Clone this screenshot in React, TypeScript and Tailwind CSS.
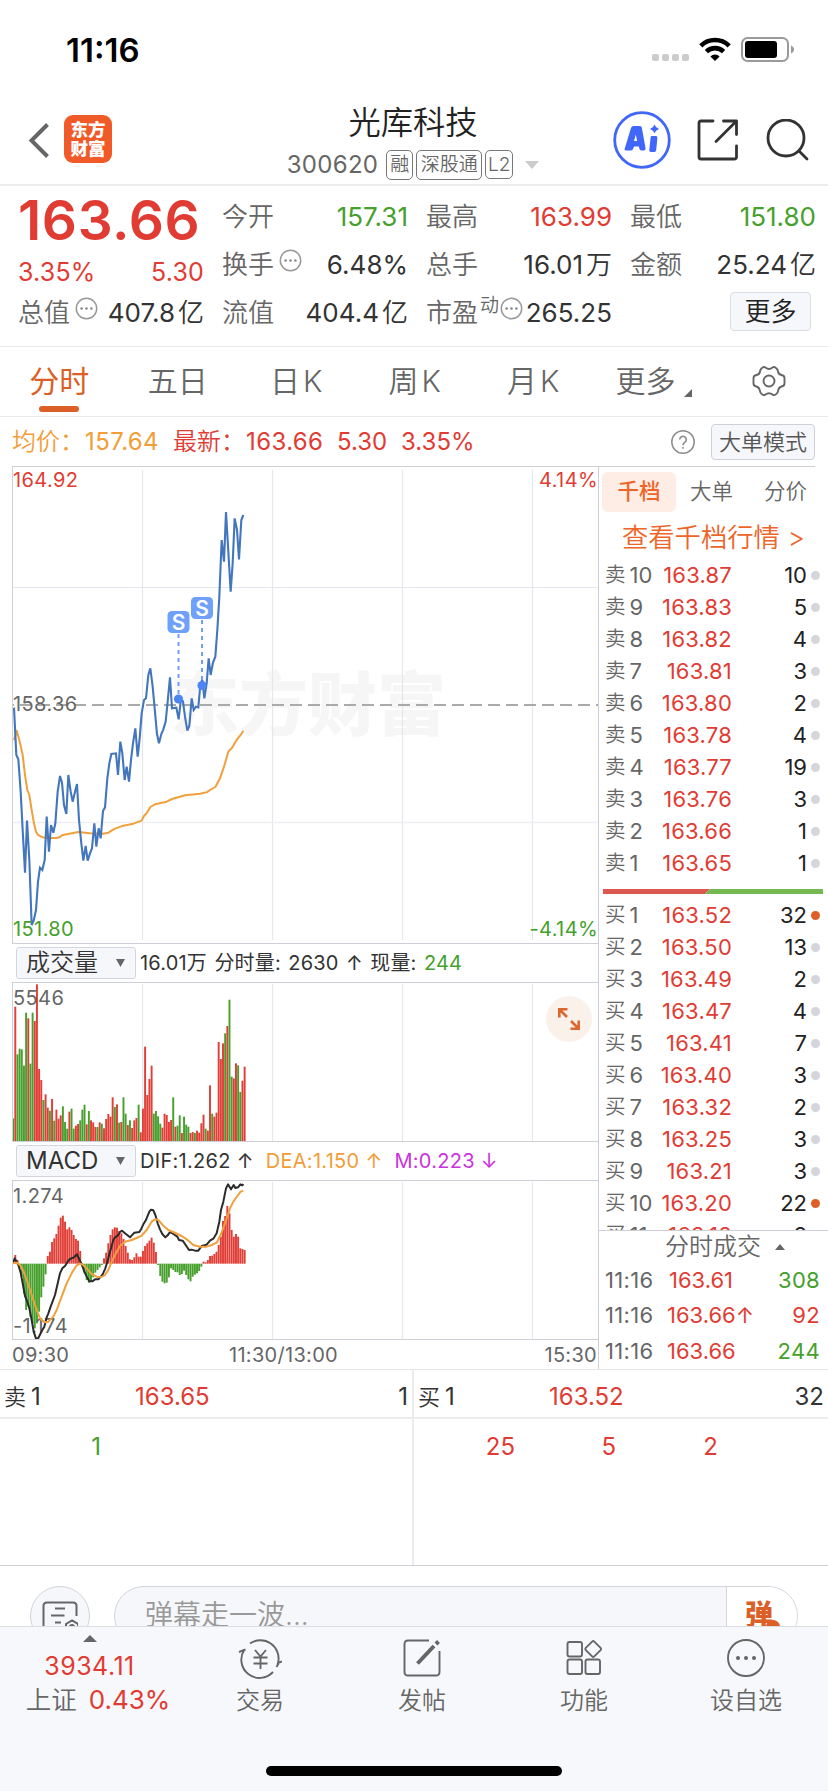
import React from "react";

const INK = "text-[#333333]";
const GRAY = "text-[#666666]";
const RED = "text-[#e03c34]";
const GREEN = "text-[#45a02c]";

const PRICE =
  "42,683 49,825 55,838 62,935 68,1050 75,1178 81,1022 88,1140 95,1335 101,1322 108,1290 114,1205 120,1163 127,1170 134,1140 140,1010 147,1115 153,1035 160,1058 166,1030 173,935 180,888 186,908 192,975 199,1002 205,885 212,935 218,965 224,940 231,912 237,1020 244,1090 250,1142 257,1098 263,1142 270,1120 276,1105 283,1030 289,1100 296,1045 302,1075 309,993 315,982 322,895 328,850 334,822 348,820 354,885 361,785 367,820 374,900 380,860 387,905 393,840 399,790 406,745 413,830 419,775 425,700 432,660 438,655 445,585 451,565 458,620 464,685 471,762 477,790 484,762 490,748 497,725 503,665 510,592 516,685 529,683 536,718 543,655 549,665 555,710 562,752 568,738 575,655 581,690 588,680 595,682 601,615 607,600 613,655 620,610 626,535 632,585 639,548 646,530 652,450 658,350 665,180 672,245 678,96 685,215 692,335 698,250 704,115 711,150 717,238 724,120 730,105";

const AVERAGE =
  "42,780 50,752 58,780 68,825 75,885 82,930 88,945 95,990 102,1030 108,1055 114,1065 125,1071 140,1074 170,1074 180,1071 186,1066 200,1063 235,1056 270,1060 310,1061 325,1058 345,1046 370,1037 400,1031 425,1022 432,1008 440,1000 451,981 465,973 500,965 516,957 555,946 600,941 620,937 630,930 646,921 660,895 672,860 685,815 695,805 710,780 722,765 730,752";

const VOLUME =
  "g535 r200 g343 g326 g328 g377 g218 r235 g371 g218 r243 r133 r387 r420 g480 r463 r503 g512 r477 g542 r509 r536 r526 g499 g546 g566 r515 g506 g566 r557 r552 g541 g509 g494 r553 g513 r541 r547 r561 g561 r547 g551 r565 r537 r522 r530 r472 g501 r493 g548 r546 g472 g521 r555 g541 r564 r541 r534 g494 r577 r506 r320 r465 r417 r377 g521 g513 g529 g551 r563 r521 r525 r546 r540 g472 r560 g557 g526 r579 g530 g554 g560 r579 r576 g579 r572 r578 r550 r524 g566 r572 r436 g521 r530 r518 r306 r357 r310 g280 r258 g179 g410 r415 r370 g376 g456 r422 r380".split(" ");

const MACD = [
  963, 945, 960, 985, 1010, 1060, 1110, 1100, 1130, 1150, 1165, 1150, 1115, 1072, 1040, 1003, 948, 935, 906, 895, 882, 857,
  833, 827, 845, 868, 862, 870, 885, 897, 902, 933, 980, 1000, 1020, 1028, 1025, 1012, 998, 990, 982, 975, 955, 938, 910,
  885, 868, 862, 863, 873, 880, 897, 918, 938, 958, 960, 952, 940, 950, 950, 933, 918, 910, 902, 893, 908, 936, 975, 1008,
  1025, 1030, 1028, 1012, 985, 990, 996, 997, 1005, 1002, 992, 1005, 1018, 1024, 1010, 1004, 1000, 993, 980, 965, 967, 960,
  948, 947, 942, 935, 915, 890, 843, 828, 798, 820, 870, 890, 882, 890, 925, 927, 930,
];

const DIF =
  "39,968 44,955 48,962 55,975 62,998 68,1030 75,1068 82,1085 88,1105 95,1140 101,1175 108,1196 115,1194 121,1182 127,1170 133,1160 139,1135 145,1120 152,1100 165,1065 172,1035 180,1000 187,985 195,978 203,965 210,957 222,952 231,943 238,958 246,975 253,995 260,1010 268,1024 277,1024 285,1018 295,1018 308,1003 316,985 322,965 330,935 340,900 345,892 354,886 360,876 366,872 375,880 390,892 403,878 418,876 424,866 430,853 438,840 448,815 453,809 460,811 466,825 473,850 480,868 487,882 496,892 503,886 510,876 520,882 532,890 537,900 548,902 555,912 567,930 575,929 585,932 595,932 605,918 620,914 630,902 640,896 650,880 658,845 663,810 670,785 678,745 684,733 693,748 701,735 706,744 714,742 721,733 727,736 730,732";

const DEA =
  "39,970 50,968 60,975 70,992 80,1020 90,1050 100,1080 110,1110 120,1135 133,1147 145,1145 160,1130 170,1110 185,1070 200,1030 215,1000 230,976 240,971 250,975 260,985 275,1002 290,1010 305,1011 315,1005 325,990 335,965 345,945 360,918 375,905 395,900 410,894 425,887 440,870 455,845 465,838 475,840 490,857 505,870 520,876 545,888 560,898 580,915 600,920 620,920 635,915 650,908 662,885 675,850 690,805 700,785 712,768 722,755 730,752";

const barX = (i: number, n: number) => 39.5 + (i * 694.5) / (n - 1);

/* ---------- small pieces ---------- */

function Dots() {
  return (
    <svg className="mb-[10px] ml-[5px] h-[23px] w-[23px] shrink-0" viewBox="0 0 23 23">
      <circle cx="11.5" cy="11.5" r="10.2" fill="none" stroke="#999" strokeWidth="1.5" />
      <circle cx="6.6" cy="11.5" r="1.3" fill="#888" />
      <circle cx="11.5" cy="11.5" r="1.3" fill="#888" />
      <circle cx="16.4" cy="11.5" r="1.3" fill="#888" />
    </svg>
  );
}

function Stat(p: { label: string; value: string; unit?: string; color?: string; dots?: boolean; sup?: string }) {
  return (
    <div className="flex h-12 w-[186px] items-center whitespace-nowrap">
      <span className={`text-[26px] font-[350] ${GRAY}`}>{p.label}</span>
      {p.sup && <span className={`mb-4 ml-[2px] text-[19px] font-[350] ${GRAY}`}>{p.sup}</span>}
      {p.dots && (
        <span className={p.sup ? "-ml-1 flex" : "flex"}>
          <Dots />
        </span>
      )}
      <span className={`ml-auto text-[26px] ${p.color ?? INK}`}>{p.value}</span>
      {p.unit && <span className={`ml-[3px] text-[26px] font-[350] ${INK}`}>{p.unit}</span>}
    </div>
  );
}

function StatusBar() {
  return (
    <div className="flex h-[98px] items-center pl-[66px] pr-[33px]">
      <span className="mt-[3px] text-[33px] font-semibold text-black">11:16</span>
      <div className="ml-auto flex items-center">
        <div className="mr-[10px] mt-4 flex gap-[3px]">
          {[0, 1, 2, 3].map((i) => (
            <span key={i} className="h-[7px] w-[7px] rounded-[2px] bg-[#cccccc]" />
          ))}
        </div>
        <svg className="mr-[10px] h-6 w-8" viewBox="0 0 32 24" fill="none" stroke="#000" strokeWidth="4.6">
          <path d="M1.8 8.8a20.4 20.4 0 0 1 28.4 0" />
          <path d="M7.4 14.6a12.4 12.4 0 0 1 17.2 0" />
          <path d="M16 24l-4.6-4.6a6.5 6.5 0 0 1 9.2 0z" fill="#000" stroke="none" />
        </svg>
        <svg className="h-[25px] w-[54px]" viewBox="0 0 54 25">
          <rect x="1" y="1" width="46" height="23" rx="5.5" fill="none" stroke="#9a9a9a" strokeWidth="2" />
          <rect x="4" y="4" width="32" height="17" rx="3" fill="#000" />
          <path d="M50 8.5c4 1.5 4 6.500 0 8z" fill="#9a9a9a" />
        </svg>
      </div>
    </div>
  );
}

function Header() {
  return (
    <div className="flex h-[88px] items-center border-b-2 border-[#ececec] pl-7 pr-[19px]">
      <svg className="mt-[-3px] h-9 w-6" viewBox="0 0 24 36" fill="none" stroke="#666" strokeWidth="4">
        <path d="M19.500 2.500L3.500 18.500 19.500 34.500" />
      </svg>
      <div className="ml-3 mt-[-4px] flex h-12 w-12 flex-col items-center justify-center rounded-[9px] bg-[#f05a28] text-[17.500px] font-black leading-[19px] text-white">
        <span>东方</span>
        <span>财富</span>
      </div>
      <div className="ml-[169px] flex w-[264px] flex-col items-center pt-[2px]">
        <div className="h-10 whitespace-nowrap text-[32.300px] font-[350] leading-10 text-[#222]">光库科技</div>
        <div className={`mt-[5px] flex h-[34px] items-center whitespace-nowrap ${GRAY}`}>
          <span className="mr-2 text-[24px] tracking-[0.3px]">300620</span>
          <span className="mr-[3px] flex h-[30px] w-[27px] items-center justify-center rounded-[5px] border border-[#777] text-[19px] font-[350]">融</span>
          <span className="mr-[3px] flex h-[30px] w-[66px] items-center justify-center rounded-[5px] border border-[#777] text-[19px] font-[350]">深股通</span>
          <span className="flex h-[29px] w-[28px] items-center justify-center rounded-[5px] border border-[#777] text-[19px] font-light">L2</span>
          <svg className="ml-3 h-2 w-[14px]" viewBox="0 0 14 8">
            <path d="M0 0h14L7 8z" fill="#ccc" />
          </svg>
        </div>
      </div>
      <svg className="ml-auto mt-[-3px] h-[58px] w-[58px]" viewBox="0 0 58 58">
        <circle cx="29" cy="29" r="27.300" fill="none" stroke="#4066fa" strokeWidth="2.800" />
        <g fill="#4066fa">
          <path fillRule="evenodd" d="M20.500 15h6.500q1.500 0 1.800 1.600L32.500 37q.4 2.400-1.600 2.400h-2.600q-1.800 0-2-1.800l-.3-2.200h-5l-1 2.500q-.6 1.500-2.200 1.500h-4.600q-2.400 0-1.300-2.500L18 17q.8-2 2.500-2zm2.300 8.500l-1.800 6.600h3.200z" />
          <path d="M38.500 25h4.500q1.600 0 1.400 1.800L43.200 39q-.2 2-1.800 2h-3.600q-1.700 0-1.500-1.900l1.300-12.300q.1-1.800.9-1.800z" />
          <path d="M41.500 13.500q1 3.300 4.500 4.400-3.500 1.100-4.500 4.400-1-3.300-4.500-4.400 3.500-1.100 4.500-4.400z" />
        </g>
      </svg>
      <svg className="ml-[26px] mt-[-3px] h-[42px] w-[42px]" viewBox="0 0 42 42" fill="none" stroke="#333" strokeWidth="2.800" strokeLinecap="round" strokeLinejoin="round">
        <path d="M16 2H4Q2 2 2 4V38Q2 40 4 40H37Q39.500 40 39.500 38V27" />
        <path d="M26.500 2H39.500V15.500M39 2.500L19 22.500" />
      </svg>
      <svg className="ml-[26px] mt-[-3px] h-[42px] w-[44px]" viewBox="0 0 44 42" fill="none" stroke="#333" strokeWidth="2.800" strokeLinecap="round">
        <circle cx="21" cy="19" r="18" />
        <path d="M34 32l8 8" />
      </svg>
    </div>
  );
}

function Quote() {
  return (
    <div className="flex h-[161px] gap-[18px] border-b border-[#ebebeb] pl-[18px] pr-3 pt-[7px]">
      <div className="w-[186px] shrink-0">
        <div className={`flex h-[54px] items-center whitespace-nowrap text-[55px] font-semibold tracking-[0.6px] ${RED}`}>163.66</div>
        <div className={`flex h-[42px] items-center justify-between pt-2 text-[25px] tracking-[0.2px] ${RED}`}>
          <span>3.35%</span>
          <span>5.30</span>
        </div>
        <Stat label="总值" dots value="407.8" unit="亿" />
      </div>
      <div>
        <Stat label="今开" value="157.31" color={GREEN} />
        <Stat label="换手" dots value="6.48%" />
        <Stat label="流值" value="404.4" unit="亿" />
      </div>
      <div>
        <Stat label="最高" value="163.99" color={RED} />
        <Stat label="总手" value="16.01" unit="万" />
        <Stat label="市盈" sup="动" dots value="265.25" />
      </div>
      <div>
        <Stat label="最低" value="151.80" color={GREEN} />
        <Stat label="金额" value="25.24" unit="亿" />
        <div className="flex h-12 w-[186px] items-center justify-end pr-[5px]">
          <span className="mt-[-3px] flex h-[39px] w-[81px] items-center justify-center rounded-[4px] border border-[#d9dde5] bg-[#f6f7fa] text-[26px] font-[350] text-[#222]">更多</span>
        </div>
      </div>
    </div>
  );
}

function Tabs() {
  const tab = "flex w-[118.500px] items-center justify-center whitespace-nowrap pb-[2px]";
  return (
    <div className={`flex h-[70px] items-center border-b border-[#ebebeb] text-[30px] font-[350] ${GRAY}`}>
      <div className="relative flex h-full w-[118.500px] items-center justify-center pb-[2px] font-normal text-[#db5f27]">
        分时
        <span className="absolute bottom-1 h-[6px] w-10 rounded-full bg-[#db5f27]" />
      </div>
      <div className={tab}>五日</div>
      <div className={tab}>日<span className="ml-[3px]">K</span></div>
      <div className={tab}>周<span className="ml-[3px]">K</span></div>
      <div className={tab}>月<span className="ml-[3px]">K</span></div>
      <div className="flex w-[119px] items-center justify-center pb-[2px] pl-[3px]">
        更多
        <svg className="ml-2 mt-6 h-2 w-2" viewBox="0 0 8 8">
          <path d="M8 0v8H0z" fill="#666" />
        </svg>
      </div>
      <svg className="mb-[2px] ml-[40px] h-8 w-[34px]" viewBox="0 0 34 32" fill="none" stroke="#666" strokeWidth="1.900" strokeLinejoin="round">
        <path d="M9.500 3.500Q11.500 1 13.500 2.500Q17 5.500 20.500 2.500Q22.500 1 24.500 3.500Q26 5 26 6.500Q26.500 9.500 29.500 10Q32.500 10.500 32.500 13V18.500Q32.500 21 29.500 21.500Q26.500 22.500 26.200 25.500Q26 28 24 29.300Q22 30.800 20.500 29.500Q17 26.800 13.500 29.500Q12 30.800 10 29.300Q8 28 7.800 25.500Q7.500 22.500 4.500 21.500Q1.500 21 1.500 18.500V13Q1.500 10.500 4.500 10Q7.500 9.500 8 6.500Q8 5 9.500 3.500Z" />
        <circle cx="17" cy="16" r="5.500" />
      </svg>
    </div>
  );
}

function InfoRow() {
  return (
    <div className="mr-[13px] ml-3 flex h-[50px] items-center whitespace-nowrap border-b border-[#cfcfd8] text-[24px]">
      <span className="w-[73px] font-[350] text-[#f29d38]">均价：</span>
      <span className="w-[88px] tracking-[0.4px] text-[#f29d38]">157.64</span>
      <span className={`w-[73px] font-[350] ${RED}`}>最新：</span>
      <span className={`w-[91px] tracking-[0.4px] ${RED}`}>163.66</span>
      <span className={`w-[64px] ${RED}`}>5.30</span>
      <span className={RED}>3.35%</span>
      <svg className="ml-auto h-6 w-6" viewBox="0 0 24 24" fill="none" stroke="#8c8c8c">
        <circle cx="12" cy="12" r="11.200" strokeWidth="1.500" />
        <path d="M8.700 9.500a3.300 3.300 0 1 1 5 2.900c-1.200.8-1.700 1.200-1.700 2.800M12 17v1.800" strokeWidth="1.600" />
      </svg>
      <span className="ml-4 flex h-9 w-[104px] items-center justify-center rounded-[4px] border border-[#cfd0da] bg-[#f6f7fa] text-[22px] font-[350] text-[#555]">大单模式</span>
    </div>
  );
}

function Grid({ h, top }: { h: number; top: number }) {
  return (
    <g stroke="#e6e7ee" strokeWidth="1.200">
      {[130, 260, 390, 520].map((x) => (
        <line key={x} x1={x + 0.500} x2={x + 0.500} y1={top} y2={h} />
      ))}
    </g>
  );
}

function SellMark({ x, y, to }: { x: number; y: number; to: number }) {
  return (
    <g>
      <line x1={x} x2={x} y1={y + 12} y2={to} stroke="#6e9df8" strokeWidth="2" strokeDasharray="4 4" />
      <rect x={x - 11} y={y - 11} width="22" height="22" rx="4.500" fill="#6fa0fa" />
      <text x={x} y={y + 7.500} textAnchor="middle" fontSize="21" fontWeight="600" fill="#fff">S</text>
      <circle cx={x} cy={to} r="4.600" fill="#4d86f2" />
    </g>
  );
}

const LABEL = "absolute text-[20px] leading-7 tracking-[0.4px]";

function Charts() {
  const n = VOLUME.length;
  const m = MACD.length;
  return (
    <div className="ml-3 w-[587px] shrink-0 border-r border-[#cfcfd8]">
      <div className="relative h-[477px] border-b border-l border-[#cfcfd8]">
        <svg className="block h-full w-full" viewBox="1 0 585 476">
          <g fill="#f6f6f6">
            <text x="158" y="263" fontSize="69" fontWeight="900" textLength="276" className="font-['Noto_Sans_CJK_SC',sans-serif]">东方财富</text>
          </g>
          <Grid h={473} top={3} />
          <line x1="0" x2="586" y1="120.500" y2="120.500" stroke="#e6e7ee" />
          <line x1="0" x2="586" y1="355.500" y2="355.500" stroke="#eeeff4" strokeWidth="1.500" />
          <line x1="0" x2="586" y1="238" y2="238" stroke="#aaa" strokeWidth="1.800" strokeDasharray="12 6" strokeDashoffset="10" />
          <g transform="translate(-12 13) scale(0.33333)" fill="none" strokeLinejoin="round">
            <polyline points={AVERAGE} stroke="#f0a03c" strokeWidth="6" />
            <polyline points={PRICE} stroke="#4376bd" strokeWidth="6.300" strokeLinejoin="miter" strokeMiterlimit="3" />
          </g>
          <SellMark x={166.500} y={155} to={232} />
          <SellMark x={190} y={141} to={218.500} />
        </svg>
        <span className={`${LABEL} left-0 top-[-1px] ${RED}`}>164.92</span>
        <span className={`${LABEL} right-0 top-[-1px] ${RED}`}>4.14%</span>
        <span className={`${LABEL} left-0 top-[223px] ${GRAY}`}>158.36</span>
        <span className={`${LABEL} bottom-0 left-0 ${GREEN}`}>151.80</span>
        <span className={`${LABEL} bottom-0 right-0 ${GREEN}`}>-4.14%</span>
      </div>

      <IndicatorBar name="成交量" light>
        <span className="tracking-[0.2px] [word-spacing:1.5px]">16.01万 分时量: 2630 ↑ 现量: <span className={GREEN}>244</span></span>
      </IndicatorBar>
      <div className="relative h-[160px] border border-r-0 border-[#cfcfd8]">
        <svg className="block h-full w-full" viewBox="1 0 585 158">
          <Grid h={158} top={1} />
          <g transform="translate(-12 -43) scale(0.33333)">
            {VOLUME.map((v, i) => (
              <rect key={i} x={barX(i, n) - 3} y={Number(v.slice(1))} width="5.800" height={604 - Number(v.slice(1))} fill={v[0] === "r" ? "#e03e36" : "#47a02d"} />
            ))}
          </g>
        </svg>
        <span className={`${LABEL} left-0 top-[1px] ${GRAY}`}>5546</span>
        <span className="absolute right-[6px] top-[13px] flex h-[46px] w-[46px] items-center justify-center rounded-full bg-[#fbf1eb]">
          <svg className="h-6 w-6" viewBox="0 0 24 24" fill="none" stroke="#db6630" strokeWidth="2.600">
            <path d="M2.300 10.500V2.300H10.500M2.500 2.500L10 10M21.700 13.500V21.700H13.500M21.500 21.500L14 14" />
          </svg>
        </span>
      </div>

      <IndicatorBar name="MACD">
        <span>DIF:1.262 ↑</span>
        <span className="ml-3 text-[#f29d38]">DEA:1.150 ↑</span>
        <span className="ml-3 text-[#cc33dd]">M:0.223 ↓</span>
      </IndicatorBar>
      <div className="relative h-[160px] border border-r-0 border-[#cfcfd8]">
        <svg className="block h-full w-full" viewBox="1 0 585 158">
          <Grid h={158} top={1} />
          <g transform="translate(-12 -241) scale(0.33333)">
            {MACD.map((v, i) => (
              <rect key={i} x={barX(i, m) - 3} y={Math.min(v, 971)} width="5.800" height={Math.abs(971 - v)} fill={v < 971 ? "#e03e36" : "#47a02d"} />
            ))}
          </g>
        </svg>
        <span className={`${LABEL} left-0 top-[1px] ${GRAY}`}>1.274</span>
        <span className={`${LABEL} bottom-[-1px] left-0 ${GRAY}`}>-1.174</span>
        <svg className="absolute inset-0 h-full w-full" viewBox="1 0 585 158">
          <g transform="translate(-12 -241) scale(0.33333)" fill="none" strokeLinejoin="round">
            <polyline points={DIF} stroke="#2b2b2b" strokeWidth="6" />
            <polyline points={DEA} stroke="#f0a03c" strokeWidth="6" />
          </g>
        </svg>
      </div>
      <div className={`flex h-[29px] items-center pt-px text-[20px] tracking-[0.3px] ${GRAY}`}>
        <span className="w-[217px]">09:30</span>
        <span>11:30/13:00</span>
        <span className="ml-auto mr-[1px]">15:30</span>
      </div>
    </div>
  );
}

function IndicatorBar({ name, light, children }: { name: string; light?: boolean; children: React.ReactNode }) {
  return (
    <div className="flex h-[38px] items-center whitespace-nowrap pl-1 text-[20px] tracking-[0.3px] text-[#333]">
      <span className="mr-1 flex h-8 w-[120px] shrink-0 items-center justify-between rounded-[3px] border border-[#d3d6de] bg-[#f6f7fa] pl-[9px] pr-[10px] tracking-normal text-[#333]">
        <span className={light ? "text-[24px] font-[350]" : "text-[24px]"}>{name}</span>
        <svg className="h-2 w-[9px]" viewBox="0 0 9 8">
          <path d="M0 0h9L4.500 8z" fill="#666" />
        </svg>
      </span>
      {children}
    </div>
  );
}

type Order = [string, string, string, boolean?];

const SELLS: Order[] = [
  ["10", "163.87", "10"], ["9", "163.83", "5"], ["8", "163.82", "4"], ["7", "163.81", "3"], ["6", "163.80", "2"],
  ["5", "163.78", "4"], ["4", "163.77", "19"], ["3", "163.76", "3"], ["2", "163.66", "1"], ["1", "163.65", "1"],
];
const BUYS: Order[] = [
  ["1", "163.52", "32", true], ["2", "163.50", "13"], ["3", "163.49", "2"], ["4", "163.47", "4"], ["5", "163.41", "7"],
  ["6", "163.40", "3"], ["7", "163.32", "2"], ["8", "163.25", "3"], ["9", "163.21", "3"], ["10", "163.20", "22", true],
  ["11", "163.18", "8"],
];

function OrderRow({ side, o }: { side: string; o: Order }) {
  return (
    <div className="flex h-8 shrink-0 items-center whitespace-nowrap pl-[6px] pr-2 text-[22px]">
      <span className={`flex w-[50px] items-center ${GRAY}`}><span className="mr-1 text-[20.500px] font-[350]">{side}</span>{o[0]}</span>
      <span className={`w-[77px] text-right tracking-[0.2px] ${RED}`}>{o[1]}</span>
      <span className="ml-auto text-[#222]">{o[2]}</span>
      <span className={`ml-1 h-[9px] w-[9px] rounded-full ${o[3] ? "bg-[#db5f27]" : "bg-[#d5d5dc]"}`} />
    </div>
  );
}

const TRADES: [string, string, string, string][] = [
  ["11:16", "163.61", "308", GREEN],
  ["11:16", "163.66↑", "92", RED],
  ["11:16", "163.66", "244", GREEN],
];

function OrderBook() {
  return (
    <div className="flex min-w-0 flex-1 flex-col">
      <div className={`flex h-[49px] shrink-0 items-center pl-[3px] pt-px text-[21.500px] font-[350] ${GRAY}`}>
        <span className="flex h-10 w-[74px] items-center justify-center rounded-[6px] bg-[#fdede5] font-medium text-[#f06427]">千档</span>
        <span className="ml-[14px]">大单</span>
        <span className="ml-[31px]">分价</span>
      </div>
      <div className="flex h-[44px] shrink-0 items-center pl-[23px] text-[26.300px] text-[#ed6528]">
        <span className="font-[350]">查看千档行情</span>
        <span className="ml-2 font-light">&gt;</span>
      </div>
      <div className="mt-[-1px]">
        {SELLS.map((o) => <OrderRow key={o[0]} side="卖" o={o} />)}
      </div>
      <svg className="mb-[5px] ml-1 mt-[10px] h-[5px] w-[220px] shrink-0" viewBox="0 0 220 5">
        <path d="M0 0H107L102 5H0z" fill="#dc5750" />
        <path d="M107 0H220V5H102z" fill="#76b852" />
      </svg>
      <div className="flex h-[332px] shrink-0 flex-col overflow-hidden border-b border-[#cfcfd8]">
        {BUYS.map((o) => <OrderRow key={o[0]} side="买" o={o} />)}
      </div>
      <div className={`flex h-[31px] items-center pl-[66px] pt-px text-[24px] font-[350] ${GRAY}`}>
        分时成交
        <svg className="ml-[14px] h-[6px] w-[10px]" viewBox="0 0 10 6">
          <path d="M0 6h10L5 0z" fill="#666" />
        </svg>
      </div>
      {TRADES.map((t, i) => (
        <div key={i} className="flex h-9 items-center whitespace-nowrap pl-[6px] pr-2 text-[22px]">
          <span className={`w-[62px] tracking-[0.3px] ${GRAY}`}>{t[0]}</span>
          <span className={`${RED} ${i === 0 ? "pl-[2px]" : ""}`}>{t[1]}</span>
          <span className={`ml-auto tracking-[0.3px] ${t[3]}`}>{t[2]}</span>
        </div>
      ))}
    </div>
  );
}

function Level({ side, price, qty }: { side: string; price: string; qty: string }) {
  return (
    <div className="flex h-[49px] items-center border-b-2 border-[#ececec] px-[4px] pt-[6px] text-[24px] text-[#333]">
      <span className="flex w-[131px] items-center"><span className="mr-[5px] text-[22px] font-[350]">{side}</span>1</span>
      <span className={RED}>{price}</span>
      <span className="ml-auto">{qty}</span>
    </div>
  );
}

function Queue() {
  return (
    <div className="flex h-[197px] border-y border-[#cfcfd8] border-t-[#e6e6e6]">
      <div className="w-[414px] border-r-2 border-[#ececec]">
        <Level side="卖" price="163.65" qty="1" />
        <div className={`flex pt-[10px] text-[24px] leading-9 ${GREEN}`}>
          <span className="w-[101px] text-right">1</span>
        </div>
      </div>
      <div className="w-[414px]">
        <Level side="买" price="163.52" qty="32" />
        <div className={`flex pt-[10px] text-[24px] leading-9 ${RED}`}>
          <span className="w-[101px] text-right">25</span>
          <span className="w-[101px] text-right">5</span>
          <span className="w-[102px] text-right">2</span>
        </div>
      </div>
    </div>
  );
}

function Danmaku() {
  return (
    <div className="flex h-[60px] overflow-hidden pl-[30px] pt-5">
      <div className="flex h-[60px] w-[60px] justify-center rounded-full border border-[#d3d4dc] bg-[#f6f7fa] pt-[14px]">
        <svg className="h-9 w-9" viewBox="0 0 36 36" fill="none" stroke="#666" strokeWidth="2">
          <path d="M1.500 32V5Q1.500 1.500 5 1.500H31Q34.500 1.500 34.500 5V15" />
          <path d="M13 7.500H23M9 14.500H22.500M13 21.500H19" />
          <path d="M24 30V23L30 19.500L36 23V30M28 26a2 2 0 0 1 4 0" />
        </svg>
      </div>
      <div className="ml-6 flex h-[60px] w-[684px] overflow-hidden rounded-[30px] border border-[#d3d4dc] bg-[#f6f7fa]">
        <span className="flex-1 pl-[30px] pt-[8px] text-[28px] font-[350] leading-10 text-[#999]">弹幕走一波...</span>
        <span className="relative w-[71px] border-l border-[#d3d4dc] bg-white pl-[18px] pt-[10px] text-[28px] font-black leading-9 text-[#db5f27]">
          弹
          <span className="absolute left-[39px] top-[33px] h-[14px] w-[14px] rounded-full bg-[#db5f27]" />
        </span>
      </div>
    </div>
  );
}

function NavItem({ label, children }: { label: string; children: React.ReactNode }) {
  return (
    <div className={`flex w-[162px] flex-col items-center ${GRAY}`}>
      <svg className="mt-[9px] h-11 w-11" viewBox="0 0 44 44" fill="none" stroke="#666" strokeWidth="1.900">
        {children}
      </svg>
      <span className="mt-[5px] text-[24px] font-[350] leading-8">{label}</span>
    </div>
  );
}

function BottomBar() {
  return (
    <div className="h-[165px] border-t border-[#dcdde3] bg-[#f7f8fb]">
      <div className="flex h-[139px]">
        <div className="flex w-[179px] flex-col items-center whitespace-nowrap">
          <svg className="mt-[8px] h-[7px] w-[14px]" viewBox="0 0 14 7">
            <path d="M0 7h14L7 0z" fill="#666" />
          </svg>
          <span className={`mt-2 text-[25px] leading-8 tracking-[0.5px] ${RED}`}>3934.11</span>
          <span className={`mt-[2px] flex items-center pl-[17px] text-[26px] leading-8 ${RED}`}>
            <span className={`mr-[12px] text-[25.500px] font-[350] ${GRAY}`}>上证</span>0.43%
          </span>
        </div>
        <NavItem label="交易">
          <path d="M12 7.500A18.200 18.200 0 0 1 40 27L44 25.500M40.500 27.500L38.500 31" />
          <path d="M35 36A18.200 18.200 0 0 1 6.500 13.500M1 16L7.500 13.500" />
          <path d="M17 14L22.500 20.500L28 14M22.500 20.500V33M15.500 21.500H29.500M15.500 27.500H29.500" />
        </NavItem>
        <NavItem label="发帖">
          <path d="M29 4.500H8Q4.500 4.500 4.500 8V36Q4.500 39.500 8 39.500H36Q39.500 39.500 39.500 36V15" />
          <path d="M17.500 27.500L34 10M36 8L38.500 5.500" strokeWidth="4" />
        </NavItem>
        <NavItem label="功能">
          <rect x="5.500" y="6" width="14.500" height="14.500" rx="2" />
          <rect x="5.500" y="23.500" width="14.500" height="14.500" rx="2" />
          <rect x="23.500" y="23.500" width="14.500" height="14.500" rx="2" />
          <rect x="25.200" y="7" width="12" height="12" rx="1.500" transform="rotate(45 31.200 13)" />
        </NavItem>
        <NavItem label="设自选">
          <circle cx="22" cy="22" r="18" />
          <circle cx="14" cy="22" r="2" fill="#666" stroke="none" />
          <circle cx="22" cy="22" r="2" fill="#666" stroke="none" />
          <circle cx="30" cy="22" r="2" fill="#666" stroke="none" />
        </NavItem>
      </div>
      <div className="mx-auto h-[10px] w-[296px] rounded-full bg-black" />
    </div>
  );
}

export default function App() {
  return (
    <div className="h-[1792px] w-[828px] overflow-hidden bg-white font-[Inter,'Noto_Sans_CJK_SC',sans-serif] leading-none">
      <StatusBar />
      <Header />
      <Quote />
      <Tabs />
      <InfoRow />
      <div className="flex h-[902px]">
        <Charts />
        <OrderBook />
      </div>
      <Queue />
      <Danmaku />
      <BottomBar />
    </div>
  );
}
